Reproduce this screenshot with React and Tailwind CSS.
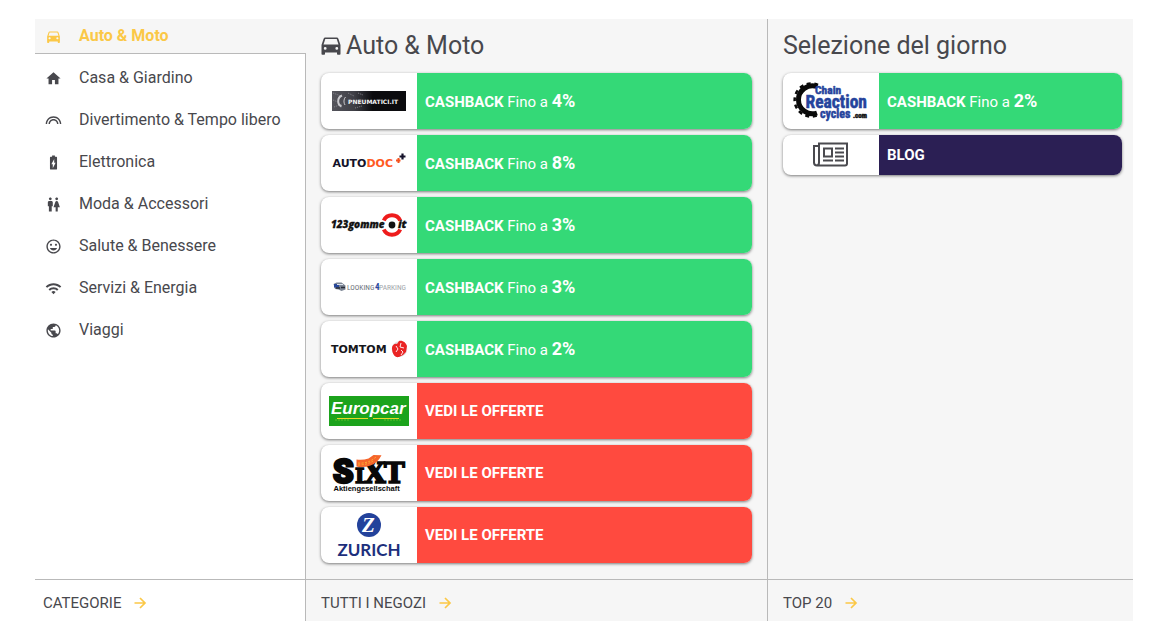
import React from "react";
import {
  MdBatteryChargingFull,
  MdDirectionsCar,
  MdHome,
  MdLooks,
  MdMood,
  MdPublic,
  MdWc,
  MdWifi,
} from "react-icons/md";

const categories = [
  { name: "Casa & Giardino", Icon: MdHome },
  { name: "Divertimento & Tempo libero", Icon: MdLooks },
  { name: "Elettronica", Icon: MdBatteryChargingFull },
  { name: "Moda & Accessori", Icon: MdWc },
  { name: "Salute & Benessere", Icon: MdMood },
  { name: "Servizi & Energia", Icon: MdWifi },
  { name: "Viaggi", Icon: MdPublic },
];

function Logo({ label, children }) {
  return (
    <svg role="img" aria-label={label} viewBox="0 0 96 56" className="h-14 w-24">
      {children}
    </svg>
  );
}

function PneumaticiLogo() {
  return (
    <Logo label="Pneumatici.it">
      <defs>
        <linearGradient id="tread">
          <stop offset="0" stopColor="#55555c" />
          <stop offset="0.3" stopColor="#3f3f46" />
          <stop offset="0.55" stopColor="#0b0b0e" />
        </linearGradient>
      </defs>
      <rect x="11" y="18" width="74" height="20" fill="url(#tread)" />
      <path d="M12 20l8 3M12 27l5 2M13 34l8-3M27 20l6 3M34 35l7-2M37 20l5 2" stroke="#85858c" strokeDasharray="1 1" />
      <path d="M21 22.500c-5 2-5 9-.5 11" fill="none" stroke="#c9c9cd" strokeWidth="2" />
      <path d="M24.500 24c-2 2-2 6-.5 8" fill="none" stroke="#c9c9cd" />
      <text x="27" y="30.500" fontFamily="'DejaVu Sans', sans-serif" fontWeight="700" fontSize="6" fill="#f4f4f4">PNEUMATICI.IT</text>
    </Logo>
  );
}

function AutodocLogo() {
  return (
    <Logo label="Autodoc">
      <text x="11.500" y="32" fontFamily="'DejaVu Sans', sans-serif" fontWeight="700" fontSize="11" fill="#14122a">
        AUTO<tspan fill="#ff5a1f">DOC</tspan>
      </text>
      <path d="M75 25.500h4.500M77.500 23v5" stroke="#f4511e" strokeWidth="2" />
      <path d="M78.500 21.500h6M81.500 18.500v6" stroke="#14122a" strokeWidth="2.200" />
    </Logo>
  );
}

function GommeLogo() {
  return (
    <Logo label="123gomme.it">
      <path d="M62.800 23.500a9 9 0 0 1 16.400 0M62.800 32.500a9 9 0 0 0 16.400 0" fill="none" stroke="#ee1c1c" strokeWidth="4" />
      <circle cx="71" cy="28" r="3.400" fill="#111" />
      <g fontFamily="'Open Sans', sans-serif" fontWeight="800" fontStyle="italic" fill="#111" stroke="#111" strokeWidth="0.300">
        <text x="10" y="31" fontSize="10">123gomme</text>
        <text x="77" y="31" fontSize="11">it</text>
      </g>
    </Logo>
  );
}

function ParkingLogo() {
  return (
    <Logo label="Looking4Parking">
      <path d="M12.500 25l3-1.500h5l4 3v4l-4 1.500-3-1.500-3.500-.5z" fill="#7b8493" />
      <path d="M13 25h5v3.500h-5z" fill="#27479a" />
      <path d="M15 29h4M20 28.500h4" stroke="#262b38" strokeWidth="1.500" />
      <path d="M16 25.500h6" stroke="#dfe5ee" />
      <text y="31" fontFamily="'Liberation Sans Narrow', 'Roboto Condensed', 'Liberation Sans', sans-serif" fontSize="7.500" fill="#a2a5aa">
        <tspan x="26" fill="#6d7179">LOOKING</tspan>
        <tspan x="54" fontWeight="700" fontSize="9" fill="#29489e">4</tspan>
        <tspan x="58">PARKING</tspan>
      </text>
    </Logo>
  );
}

function TomTomLogo() {
  return (
    <Logo label="TomTom">
      <text x="10" y="32" fontFamily="'DejaVu Sans', sans-serif" fontWeight="700" fontSize="11" fill="#17171c">
        TOMTOM
      </text>
      <circle cx="78.500" cy="28" r="7.800" fill="#e0dfe0" />
      <path d="M71 27c0-3 3-5 5-4l2-3c4-1 7 2 8 5l-1 6-3 3-4 2c-4 1-7-3-7-9z" fill="#ea2424" />
      <path d="M75 25l2 3-2 3M80 22l-1 4 4 1M80 29l2 2-2 3" fill="none" stroke="#fff" strokeWidth="0.900" />
    </Logo>
  );
}

function EuropcarLogo() {
  return (
    <Logo label="Europcar">
      <rect x="8" y="13" width="80" height="30" fill="#1ca31c" />
      <text x="10" y="31" fontFamily="'Liberation Sans', Arial, sans-serif" fontWeight="700" fontStyle="italic" fontSize="17" fill="#fff">Europcar</text>
      <path d="M16 35.500h31M52 35.500h26" stroke="#e7da27" />
      <path d="M14 37h14M63 37h18" stroke="#78c832" strokeDasharray="2 1" strokeWidth="0.700" />
    </Logo>
  );
}

function SixtLogo() {
  return (
    <Logo label="Sixt Aktiengesellschaft">
      <text fontFamily="'DejaVu Serif', serif" fontWeight="700" fill="#080808" stroke="#080808" strokeWidth="1.500">
        <tspan x="12" y="37.500" fontFamily="Roboto, sans-serif" fontWeight="900" fontSize="33" strokeWidth="2.500">S</tspan>
        <tspan x="34" fontSize="20">I</tspan>
        <tspan x="43" fontSize="28">X</tspan>
        <tspan x="63" fontSize="28">T</tspan>
        <tspan x="12.500" y="45.500" fontFamily="'Liberation Sans', Arial, sans-serif" fontSize="7.500" strokeWidth="0">Aktiengesellschaft</tspan>
      </text>
      <path d="M35.500 14.500q6 1 12-1l5-3.500 8 .3q-4 8-11 10.200-7 2.500-14 1z" fill="#f5652b" />
      <path d="M37 18q10 1 18-6M37 20q9 0 15-4" fill="none" stroke="#ffae32" strokeDasharray="2 1.500" />
    </Logo>
  );
}

function ZurichLogo() {
  return (
    <Logo label="Zurich">
      <circle cx="48" cy="18" r="12" fill="#23429b" />
      <text x="47.500" y="25" textAnchor="middle" fontFamily="'Liberation Serif', serif" fontWeight="700" fontStyle="italic" fontSize="21" fill="#fff">Z</text>
      <text x="48" y="49" textAnchor="middle" fontFamily="Lato, sans-serif" fontWeight="700" fontSize="17" fill="#1d2f7c">ZURICH</text>
    </Logo>
  );
}

function ChainReactionLogo() {
  return (
    <Logo label="Chain Reaction Cycles.com">
      <path d="M34 13.500A14 14 0 1 0 34 40" fill="none" stroke="#0a0a0a" strokeWidth="5" />
      <path d="M35 12A16.500 16.500 0 1 0 35 42" fill="none" stroke="#0a0a0a" strokeWidth="2.500" strokeDasharray="4 3.500" />
      <text fontFamily="'Liberation Sans Narrow', 'Roboto Condensed', 'Liberation Sans', sans-serif" fontWeight="700" fill="#25439c" stroke="#25439c" strokeWidth="0.500">
        <tspan x="32" y="21" fontSize="11.500">Chain</tspan>
        <tspan x="22.500" y="35" fontSize="17.500">Reaction</tspan>
        <tspan x="37" y="45" fontSize="12">cycles</tspan>
        <tspan x="70" y="45" fontSize="7" fill="#111" stroke="#111">.com</tspan>
      </text>
    </Logo>
  );
}

function NewspaperIcon() {
  return (
    <svg aria-hidden="true" viewBox="0 0 36 26" className="h-[26px] w-9" fill="none" stroke="#4a4a4f" strokeWidth="2">
      <path d="M6 1.500h28v20q0 2-2 2H4q-3 0-3-3V4h5zM6 4v16.500q0 3-2.500 3" />
      <path d="M11 6.500h8v8h-8zM22 6.500h9M22 10.500h9M22 14.500h9M10 18.500h10M22 18.500h9" />
    </svg>
  );
}

function CarIcon() {
  return (
    <svg aria-hidden="true" viewBox="0 0 20 18" className="h-[18px] w-5" fill="currentColor">
      <path
        fillRule="evenodd"
        d="M4.200.5h11.600q1.200 0 1.600 1.200L19.500 8v9q0 .8-.8.800h-1.900q-.8 0-.8-.8v-1.500H4V17q0 .8-.8.800H1.300q-.8 0-.8-.8V8L2.600 1.700Q3 .5 4.200.5zM4.300 2 2.500 7.500h15L15.700 2zM4.200 10a1.400 1.400 0 1 0 0 2.800 1.400 1.400 0 0 0 0-2.800zm11.600 0a1.400 1.400 0 1 0 0 2.800 1.400 1.400 0 0 0 0-2.800z"
      />
    </svg>
  );
}

function ArrowIcon() {
  return (
    <svg aria-hidden="true" viewBox="0 0 16 16" className="size-4 text-[#fbc847]" fill="none" stroke="currentColor" strokeWidth="1.700">
      <path d="M2.500 8h10.300M8 3l5 5-5 5" />
    </svg>
  );
}

const shops = [
  { Logo: PneumaticiLogo, cashback: "4%" },
  { Logo: AutodocLogo, cashback: "8%" },
  { Logo: GommeLogo, cashback: "3%" },
  { Logo: ParkingLogo, cashback: "3%" },
  { Logo: TomTomLogo, cashback: "2%" },
  { Logo: EuropcarLogo },
  { Logo: SixtLogo },
  { Logo: ZurichLogo },
];

function Card({ logo, color, height = "h-14", children }) {
  return (
    <a
      href="#"
      className={`flex ${height} overflow-hidden rounded-lg bg-white text-[15px] text-white shadow-[0_1px_3px_rgba(0,0,0,0.5)]`}
    >
      <span className="flex w-24 shrink-0 items-center justify-center">{logo}</span>
      <span className={`flex flex-1 items-center px-2 ${color}`}>
        <span className="leading-5">{children}</span>
      </span>
    </a>
  );
}

function ShopCard({ shop }) {
  if (!shop.cashback) {
    return (
      <Card logo={<shop.Logo />} color="bg-[#ff4a3f]">
        <b>VEDI LE OFFERTE</b>
      </Card>
    );
  }
  return (
    <Card logo={<shop.Logo />} color="bg-[#34d977]">
      <b>CASHBACK</b> Fino a <b className="text-[18px]">{shop.cashback}</b>
    </Card>
  );
}

function FooterLink({ children }) {
  return (
    <a href="#" className="flex items-center gap-[11px] text-[15px] leading-5">
      {children}
      <ArrowIcon />
    </a>
  );
}

export default function App() {
  return (
    <div className="bg-white pt-[19px] pr-9 pb-5 pl-[35px] font-[Roboto,sans-serif] text-[#48484d]">
      <div className="grid grid-cols-[271fr_462fr_365fr]">
        <nav className="flex flex-col">
          <a
            href="#"
            aria-current="page"
            className="flex h-[35px] items-center gap-[17px] border-b border-[#b9b9b9] bg-[#f6f6f6] pl-2.5 font-bold text-[#fbc847]"
          >
            <MdDirectionsCar className="size-[17px]" />
            Auto & Moto
          </a>
          <ul className="flex-1 border-r border-[#b9b9b9] pt-[3px]">
            {categories.map(({ name, Icon }) => (
              <li key={name}>
                <a href="#" className="flex h-[42px] items-center gap-[17px] pl-2.5">
                  <Icon className="size-[17px]" />
                  {name}
                </a>
              </li>
            ))}
          </ul>
        </nav>

        <section className="border-r border-[#b9b9b9] bg-[#f6f6f6] px-[15px] pt-2 pb-4">
          <h2 className="mb-2 flex h-[38px] items-center gap-[5px] text-[25px]">
            <CarIcon />
            Auto & Moto
          </h2>
          <div className="flex flex-col gap-1.5">
            {shops.map((shop) => (
              <ShopCard key={shop.Logo.name} shop={shop} />
            ))}
          </div>
        </section>

        <section className="bg-[#f6f6f6] pt-2 pr-[11px] pb-4 pl-[15px]">
          <h2 className="mb-2 flex h-[38px] items-center text-[25px]">Selezione del giorno</h2>
          <div className="flex flex-col gap-1.5">
            <ShopCard shop={{ Logo: ChainReactionLogo, cashback: "2%" }} />
            <Card logo={<NewspaperIcon />} color="bg-[#2b1f54]" height="h-10">
              <b>BLOG</b>
            </Card>
          </div>
        </section>

        <div className="flex h-[42px] items-center border-t border-r border-[#b9b9b9] pt-1 pl-2">
          <FooterLink>CATEGORIE</FooterLink>
        </div>
        <div className="flex h-[42px] items-center border-t border-r border-[#b9b9b9] bg-[#f6f6f6] pt-1 pl-[15px]">
          <FooterLink>TUTTI I NEGOZI</FooterLink>
        </div>
        <div className="flex h-[42px] items-center border-t border-[#b9b9b9] bg-[#f6f6f6] pt-1 pl-[15px]">
          <FooterLink>TOP 20</FooterLink>
        </div>
      </div>
    </div>
  );
}
